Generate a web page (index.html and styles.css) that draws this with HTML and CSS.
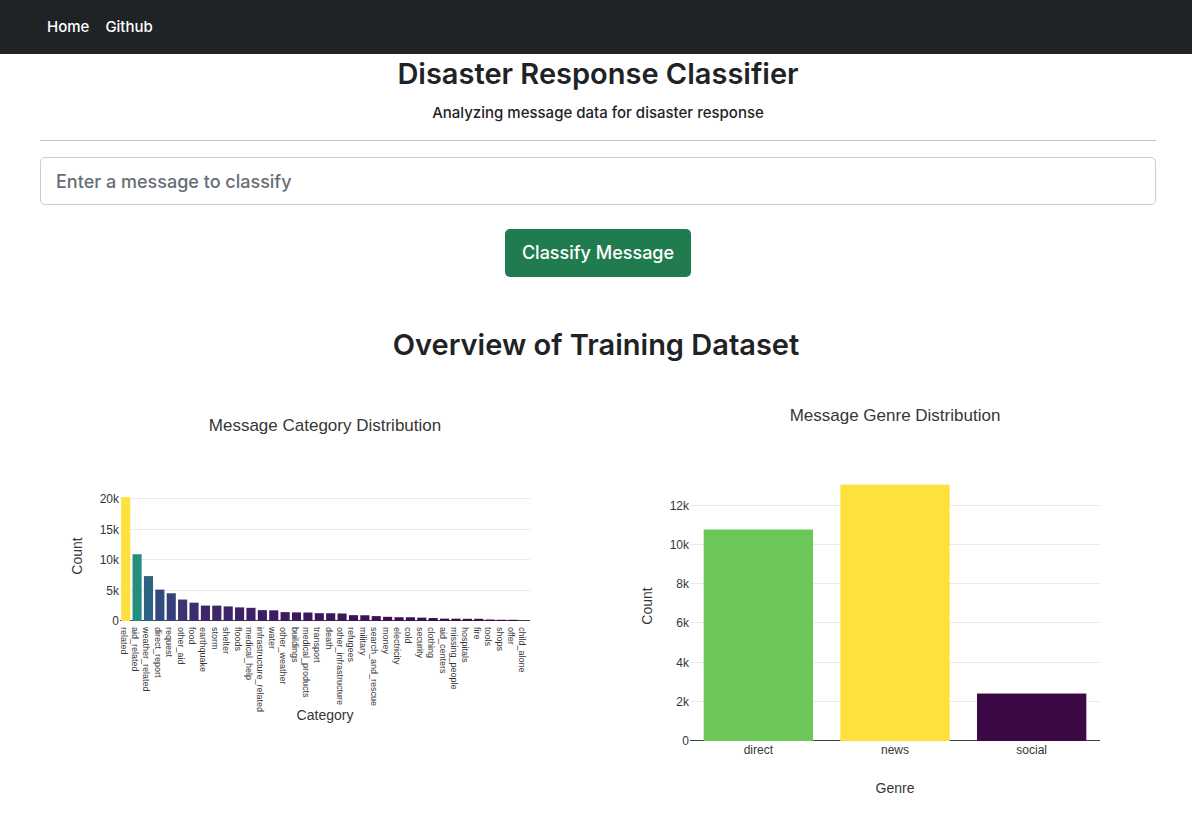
FILE: index.html
```html
<!DOCTYPE html>
<html lang="en">
<head>
<meta charset="utf-8">
<title>Disaster Response Classifier</title>
<link rel="stylesheet" href="styles.css">
</head>
<body>
<nav class="navbar">
  <a class="nav-link" href="#">Home</a>
  <a class="nav-link" href="#">Github</a>
</nav>
<main>
  <header class="intro">
    <h1 class="heading">Disaster Response Classifier</h1>
    <p class="lead">Analyzing message data for disaster response</p>
  </header>
  <form class="classify">
    <input class="message" type="text" name="query" aria-label="Message" placeholder="Enter a message to classify">
    <button class="submit" type="button">Classify Message</button>
  </form>
  <h2 class="heading overview">Overview of Training Dataset</h2>
  <section class="charts">
    <svg class="chart" id="categories" viewBox="0 0 570 450" role="img" aria-label="Message Category Distribution"></svg>
    <svg class="chart" id="genres" viewBox="0 0 570 450" role="img" aria-label="Message Genre Distribution"></svg>
  </section>
</main>
<script src="charts.js"></script>
</body>
</html>
```
FILE: styles.css
```css
*, *::before, *::after { box-sizing: border-box; }

body {
  margin: 0;
  background: #fff;
  color: #1f2326;
  font-family: Inter, "Liberation Sans", sans-serif;
  font-size: 15px;
  font-weight: 500;
  line-height: 24px;
}

.navbar {
  display: flex;
  gap: 16px;
  padding: 15px 47px;
  background: #1f2326;
}

.nav-link { color: #fff; text-decoration: none; }

.intro {
  margin: 0 36px 16px 40px;
  padding: 1px 0 15px;
  border-bottom: 1px solid #c1c2c3;
  text-align: center;
}

.heading {
  margin: 0;
  font-size: 29px;
  font-weight: 600;
  line-height: 38px;
  text-align: center;
}

.lead { margin: 8px 0 0; font-weight: 500; }

.classify {
  display: flex;
  flex-direction: column;
  align-items: center;
  gap: 24px;
  margin: 0 36px 0 40px;
}

.message, .submit {
  height: 48px;
  border-radius: 5px;
  font: inherit;
  font-size: 18px;
}

.message {
  width: 100%;
  padding: 0 15px;
  border: 1px solid #c9ced4;
  background: #fff;
  color: #1f2326;
}

.message::placeholder { color: #666e76; opacity: 1; }

.submit {
  padding: 0 17px;
  border: 0;
  background: #207b4e;
  color: #fff;
}

.overview { margin-top: 49px; }

.charts {
  display: grid;
  grid-template-columns: 1fr 1fr;
  padding: 1px 12px 0 40px;
}

.chart { display: block; width: 100%; }

.chart text { fill: #363636; font-family: "Liberation Sans", sans-serif; }

.chart-title { font-size: 17px; text-anchor: middle; }
.axis-title { font-size: 14px; text-anchor: middle; }
.tick { font-size: 12px; }
.tick-y { text-anchor: end; }
.tick-x { text-anchor: middle; }
.tick-small { font-size: 9px; }
.grid { fill: #eaeaea; }
.axis { fill: #424242; }
```
FILE: charts.js
```js
const SVG = "http://www.w3.org/2000/svg";
const LEFT = 80;
const WIDTH = 410;

// Colour scale: position, red, green, blue
const SCALE = [
  [0, 60, 8, 70], [0.06, 60, 24, 90], [0.12, 62, 38, 105], [0.17, 58, 52, 115],
  [0.22, 54, 65, 122], [0.25, 50, 75, 125], [0.36, 44, 98, 130],
  [0.54, 35, 143, 125], [0.785, 108, 199, 89], [1, 254, 225, 60]
];

function colour(t) {
  let i = 1;
  while (i < SCALE.length - 1 && t > SCALE[i][0]) i++;
  const a = SCALE[i - 1], b = SCALE[i];
  const f = (t - a[0]) / (b[0] - a[0]);
  return "rgb(" + [1, 2, 3].map(k => Math.round(a[k] + (b[k] - a[k]) * f)).join(",") + ")";
}

function add(svg, tag, attrs, text) {
  const node = document.createElementNS(SVG, tag);
  for (const key in attrs) node.setAttribute(key, attrs[key]);
  if (text !== undefined) node.textContent = text;
  svg.appendChild(node);
}

function draw(id, c) {
  const svg = document.getElementById(id);
  const max = Math.max(...c.data.map(d => d[1]));
  const min = Math.min(...c.data.map(d => d[1]));
  const step = WIDTH / c.data.length;
  add(svg, "text", { class: "chart-title", x: 285, y: c.titleY }, c.title);
  for (let v = 0; v <= max; v += c.tick) {
    const y = Math.floor(c.base + 0.5 - v * c.scale);
    if (v) add(svg, "rect", { class: "grid", x: LEFT, y: y, width: WIDTH, height: 1 });
    add(svg, "text", { class: "tick tick-y", x: LEFT - 1, y: y + 5 }, v ? v / 1000 + "k" : "0");
  }
  add(svg, "rect", { class: "axis", x: LEFT, y: c.base, width: WIDTH, height: 1 });
  c.data.forEach(([name, value], i) => {
    const mid = LEFT + step * (i + 0.5);
    const h = value * c.scale;
    if (value) add(svg, "rect", {
      x: mid - step * 0.4, y: c.base + 0.5 - h, width: step * 0.8, height: h + 0.5,
      fill: colour((value - min) / (max - min))
    });
    if (c.vertical) {
      add(svg, "text", { class: "tick-small", transform: `translate(${mid - 5} ${c.base + 7}) rotate(90)` }, name);
    } else {
      add(svg, "text", { class: "tick tick-x", x: mid, y: c.base + 14 }, name);
    }
  });
  add(svg, "text", { class: "axis-title", x: 285, y: c.xTitleY }, c.xTitle);
  add(svg, "text", { class: "axis-title", transform: `translate(42 ${c.yTitleY}) rotate(-90)` }, "Count");
}

draw("categories", {
  title: "Message Category Distribution", titleY: 66, xTitle: "Category", xTitleY: 355, yTitleY: 191,
  base: 255, scale: 0.00608, tick: 5000, vertical: true,
  data: [
    ["related", 20282], ["aid_related", 10903], ["weather_related", 7304], ["direct_report", 5081],
    ["request", 4480], ["other_aid", 3448], ["food", 2930], ["earthquake", 2457], ["storm", 2448],
    ["shelter", 2319], ["floods", 2158], ["medical_help", 2087], ["infrastructure_related", 1705],
    ["water", 1674], ["other_weather", 1376], ["buildings", 1335], ["medical_products", 1314],
    ["transport", 1203], ["death", 1196], ["other_infrastructure", 1151], ["refugees", 876],
    ["military", 861], ["search_and_rescue", 724], ["money", 604], ["electricity", 534], ["cold", 530],
    ["security", 471], ["clothing", 406], ["aid_centers", 309], ["missing_people", 299],
    ["hospitals", 283], ["fire", 282], ["tools", 159], ["shops", 120], ["offer", 119], ["child_alone", 0]
  ]
});

draw("genres", {
  title: "Message Genre Distribution", titleY: 56, xTitle: "Genre", xTitleY: 428, yTitleY: 241,
  base: 375, scale: 0.0196, tick: 2000, vertical: false,
  data: [["direct", 10766], ["news", 13054], ["social", 2396]]
});
```
